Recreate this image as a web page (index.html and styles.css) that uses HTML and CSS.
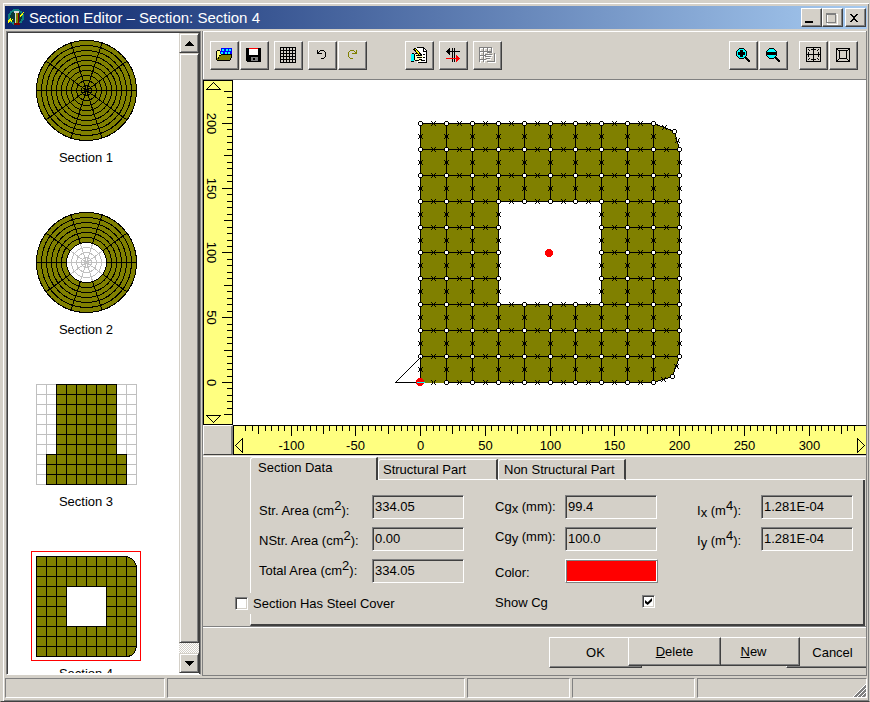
FILE: index.html
```html
<!DOCTYPE html>
<html lang="en">
<head>
<meta charset="utf-8">
<title>Section Editor</title>
<link rel="stylesheet" href="styles.css">
</head>
<body>
<div class="window">
  <header class="titlebar">
    <svg class="app-icon" width="19" height="19" viewBox="0 0 19 19" shape-rendering="crispEdges">
      <circle cx="9" cy="9" r="7" fill="#083838" stroke="#108080" stroke-width="2"/>
      <path d="M9 5h2v10H9z" fill="#808000"/>
      <path d="M7 3h5v2H7zM8 5h1v10H8z" fill="#d8d8d8"/>
      <path d="M11 5h1v10h-1z" fill="#800000"/>
      <path d="M1 13l3-4v3l2-1-2 4v-2l-3 2zM13 7l5-5-2 4-3 3z" fill="#ffff00"/>
      <path d="M7 15h6v2H7z" fill="#800000"/>
    </svg>
    <h1 class="title">Section Editor – Section: Section 4</h1>
    <div class="caption-buttons">
      <button class="cap" type="button" aria-label="Minimize"><svg width="16" height="14" shape-rendering="crispEdges"><path d="M3 10h8v2H3z"/></svg></button>
      <button class="cap" type="button" aria-label="Maximize" disabled><svg width="16" height="14" shape-rendering="crispEdges"><path d="M4 3.500h10v10H4z" fill="none" stroke="#fff"/><path d="M3.500 2.500h9v9h-9zM3 3.500h10" fill="none" stroke="#808080"/></svg></button>
      <button class="cap cap-close" type="button" aria-label="Close"><svg width="16" height="14" shape-rendering="crispEdges"><path d="M4 3h2v1h1v1h2V4h1V3h2v1h-1v1h-1v1H9v2h1v1h1v1h1v1h-2v-1H9V9H7v1H6v1H4v-1h1V9h1V8h1V6H6V5H5V4H4z"/></svg></button>
    </div>
  </header>

  <div class="workspace">
    <aside class="browser">
      <ul class="sections">
        <li class="section"><div class="thumb"><svg id="thumb1" width="101" height="101"></svg></div><span>Section 1</span></li>
        <li class="section"><div class="thumb"><svg id="thumb2" width="101" height="101"></svg></div><span>Section 2</span></li>
        <li class="section"><div class="thumb"><svg id="thumb3" width="101" height="101"></svg></div><span>Section 3</span></li>
        <li class="section"><div class="thumb selected"><svg id="thumb4" width="101" height="101"></svg></div><span>Section 4</span></li>
      </ul>
      <div class="scrollbar">
        <button class="scroll-btn" type="button" aria-label="Scroll up"><svg width="9" height="5" shape-rendering="crispEdges"><path d="M4 0h1v1h1v1h1v1h1v1h1v1H0V4h1V3h1V2h1V1h1z"/></svg></button>
        <div class="scroll-thumb"></div>
        <button class="scroll-btn scroll-down" type="button" aria-label="Scroll down"><svg width="9" height="5" shape-rendering="crispEdges"><path d="M0 0h9v1H8v1H7v1H6v1H5v1H4V4H3V3H2V2H1V1H0z"/></svg></button>
      </div>
    </aside>

    <main class="editor">
      <div class="toolbar">
        <div class="tools">
          <button class="tool" type="button" aria-label="Open"><svg width="17" height="16" shape-rendering="crispEdges"><path d="M5 1h11v6H4V4h1z" fill="#0000ff"/><path d="M6 2h2v2H6zM10 2h2v2h-2zM13 2h2v2h-2zM5 5h2v2H5zM9 5h2v2H9zM12 5h2v2h-2z" fill="#00ffff"/><path d="M1 4h3v3h1v2H3v2H1z" fill="#ffff80"/><path d="M5 8h11v2h-1v2h-1v1H1v-2h2V9h2z" fill="#808000"/><path d="M1 3h3v1H1zM0 4h1v9H0zM1 13h13v1H1zM5 7h11v1H5zM3 8h2v1H3zM2 10h1v2H2zM15 8h1v3h-1zM14 11h1v2h-1z"/></svg></button>
          <button class="tool" type="button" aria-label="Save"><svg width="17" height="16" shape-rendering="crispEdges"><path d="M0 1h15v14H1v-1H0z"/><path d="M3 2h9v6H3z" fill="#fff"/><path d="M3 1h9v1H3z" fill="#f00"/><path d="M5 10h7v4H5z" fill="#808080"/><path d="M7 11h2v2H7z" fill="#000"/></svg></button>
        </div>
        <button class="tool gap-s" type="button" aria-label="Grid"><svg width="17" height="17" shape-rendering="crispEdges"><path d="M.5 0v16M3.500 0v16M6.500 0v16M9.500 0v16M12.500 0v16M15.500 0v16M0 .5h16M0 3.500h16M0 6.500h16M0 9.500h16M0 12.500h16M0 15.500h16" stroke="#000"/></svg></button>
        <div class="tools gap-s">
          <button class="tool" type="button" aria-label="Undo"><svg width="17" height="16" shape-rendering="crispEdges"><path d="M3 3h1v4H3zM4 6h4v1H4zM4 5h1v1H4zM5 4h1v1H5zM6 3h4v1H6zM10 4h1v1h-1zM11 5h1v5h-1zM10 10h1v1h-1zM7 11h3v1H7z"/></svg></button>
          <button class="tool" type="button" aria-label="Redo"><svg width="17" height="16" shape-rendering="crispEdges"><path d="M12 3h1v4h-1zM8 6h4v1H8zM11 5h1v1h-1zM10 4h1v1h-1zM6 3h4v1H6zM5 4h1v1H5zM4 5h1v5H4zM5 10h1v1H5zM6 11h3v1H6z" fill="#808000"/></svg></button>
        </div>
        <div class="tools tools-mid">
          <button class="tool" type="button" aria-label="Edit"><svg width="17" height="17" shape-rendering="crispEdges"><path d="M5 1h8l3 3v12H6z" fill="#fff"/><path d="M5.500 .5h7l3 3v12h-9M12.500 1v3h3M8 13.500h6M12 7.500h2M12 10.500h2" fill="none" stroke="#000"/><path d="M0 7h3v7H0z" fill="#00ffff"/><path d="M3 7h7v2h2v2h-2v3H4l-1-1z" fill="#ffffc0"/><path d="M3.500 7v6M4 6.500h5M5 8.500h6M6 10.500h5M4 13.500h4M8 12.500h3M1 6.500h2M0 14.500h3" stroke="#000"/><path d="M3.500 1.500l6 7" stroke="#000" stroke-width="3"/><path d="M4 2l5 6" stroke="#ffff00" stroke-width="1"/></svg></button>
          <button class="tool" type="button" aria-label="Move axes"><svg width="17" height="17" shape-rendering="crispEdges"><path d="M7 1h1v14H7zM9 1h1v14H9zM2 4h13v1H2zM1 4h1V3h1V2h1V1h1v7H4V7H3V6H2V5H1z"/><path d="M1 11h13v1H1zM11 8h1v1h1v1h1v1h1v1h-1v1h-1v1h-1v1h-1z" fill="#f00"/></svg></button>
          <button class="tool" type="button" aria-label="Edit mesh" disabled><svg width="18" height="17" shape-rendering="crispEdges"><g fill="none" stroke="#fff" transform="translate(1 1)"><path d="M.5 0v15M4.500 0v15M8.500 0v6M12.500 0v5M0 .5h13M0 4.500h13M0 8.500h7M0 12.500h7M6 7.500h7M6 9.500h6M7 11.500h4M8 14.500h8M15.500 6v9"/></g><path d="M.5 0v15M4.500 0v15M8.500 0v6M12.500 0v5M0 .5h13M0 4.500h13M0 8.500h7M0 12.500h7M6 7.500h7M6 9.500h6M7 11.500h4M8 14.500h8M15.500 6v9M9 5.500h4" fill="none" stroke="#808080"/></svg></button>
        </div>
        <div class="tools tools-end">
          <button class="tool" type="button" aria-label="Zoom in"><svg width="17" height="16" shape-rendering="crispEdges"><path d="M4 1h5v1h1v1h1v1h1v5h-1v1h-1v1H9v1H4v-1H3v-1H2V9H1V4h1V3h1V2h1z"/><path d="M4 2h5v1h1v1h1v5h-1v1H9v1H4v-1H3V9H2V4h1V3h1z" fill="#00ffff"/><path d="M5 3h3v2h2v3H8v2H5V8H3V5h2zM10 10h2v1h1v1h1v1h1v2h-2v-1h-1v-1h-1v-1h-1z"/></svg></button>
          <button class="tool" type="button" aria-label="Zoom out"><svg width="17" height="16" shape-rendering="crispEdges"><path d="M4 1h5v1h1v1h1v1h1v5h-1v1h-1v1H9v1H4v-1H3v-1H2V9H1V4h1V3h1V2h1z"/><path d="M4 2h5v1h1v1h1v5h-1v1H9v1H4v-1H3V9H2V4h1V3h1z" fill="#00ffff"/><path d="M2 5h9v3H2zM10 10h2v1h1v1h1v1h1v2h-2v-1h-1v-1h-1v-1h-1z"/></svg></button>
        </div>
        <div class="tools gap-l">
          <button class="tool" type="button" aria-label="Fit all"><svg width="17" height="16" shape-rendering="crispEdges"><path d="M1.500 .5h14v14h-14zM8.500 0v15M1 7.500h15M6 2.500h5M6 12.500h5M3.500 5v5M13.500 5v5M3 2.500h1M4 3.500h1M13 2.500h1M12 3.500h1M3 12.500h1M4 11.500h1M13 12.500h1M12 11.500h1" fill="none" stroke="#000"/></svg></button>
          <button class="tool" type="button" aria-label="Fit section"><svg width="17" height="16" shape-rendering="crispEdges"><path d="M1.500 1.500h13v13h-13zM4.500 3.500h7v8h-7zM2 2.500h1M3 3.500h1M12 3.500h1M13 2.500h1M3 12.500h1M2 13.500h1M12 12.500h1M13 13.500h1" fill="none" stroke="#000"/></svg></button>
        </div>
      </div>

      <div class="plot">
        <svg class="ruler ruler-v" id="rulerV"></svg>
        <svg class="canvas" id="canvas"></svg>
        <div class="corner"></div>
        <svg class="ruler ruler-h" id="rulerH"></svg>
      </div>

      <section class="data">
        <div class="tabs" role="tablist">
          <button class="tab active" type="button" role="tab" aria-selected="true">Section Data</button>
          <button class="tab tab-part" type="button" role="tab" aria-selected="false">Structural Part</button>
          <button class="tab" type="button" role="tab" aria-selected="false">Non Structural Part</button>
          <div class="tab-rest"></div>
        </div>
        <div class="page">
          <div class="fields">
            <div class="labels labels-area">
              <label for="str">Str. Area (cm<sup>2</sup>):</label>
              <label for="nstr">NStr. Area (cm<sup>2</sup>):</label>
              <label for="total">Total Area (cm<sup>2</sup>):</label>
            </div>
            <div class="inputs">
              <input id="str" type="text" value="334.05" readonly>
              <input id="nstr" type="text" value="0.00" readonly>
              <input id="total" type="text" value="334.05" readonly>
            </div>
            <div class="labels labels-cg">
              <label for="cgx">Cg<sub>x</sub> (mm):</label>
              <label for="cgy">Cg<sub>y</sub> (mm):</label>
              <label class="color-label" for="color">Color:</label>
              <label for="showcg">Show Cg</label>
            </div>
            <div class="inputs">
              <input id="cgx" type="text" value="99.4" readonly>
              <input id="cgy" type="text" value="100.0" readonly>
              <button id="color" class="swatch" type="button"></button>
              <input id="showcg" class="check check-cg" type="checkbox" checked>
            </div>
            <div class="labels labels-inertia">
              <label for="ix">I<sub>x</sub> (m<sup>4</sup>):</label>
              <label for="iy">I<sub>y</sub> (m<sup>4</sup>):</label>
            </div>
            <div class="inputs">
              <input id="ix" type="text" value="1.281E-04" readonly>
              <input id="iy" type="text" value="1.281E-04" readonly>
            </div>
          </div>
          <div class="cover">
            <input id="cover" class="check" type="checkbox">
            <label for="cover">Section Has Steel Cover</label>
          </div>
        </div>
      </section>

      <footer class="actions">
        <button class="action" type="button">OK</button>
        <button class="action short top" type="button"><u>D</u>elete</button>
        <button class="action short" type="button"><u>N</u>ew</button>
        <button class="action under" type="button">Cancel</button>
      </footer>
    </main>
  </div>

  <div class="statusbar">
    <div class="cell cell-a"></div>
    <div class="cell cell-b"></div>
    <div class="cell cell-c"></div>
    <div class="cell cell-d"></div>
    <div class="cell cell-e"><svg width="13" height="13"><path d="M0 13L13 0M4 13L13 4M8 13L13 8" stroke="#fff"/><path d="M1.500 13L13 1.500M2.500 13L13 2.500M5.500 13L13 5.500M6.500 13L13 6.500M9.500 13L13 9.500M10.500 13L13 10.500" stroke="#808080"/></svg></div>
  </div>
</div>
<script src="app.js"></script>
</body>
</html>
```
FILE: styles.css
```css
* { box-sizing: border-box; }
body {
  margin: 0;
  background: #d4d0c8;
  color: #000;
  font: 13px/16px "Liberation Sans", Arial, sans-serif;
}
button, input { font: inherit; color: inherit; margin: 0; padding: 0; border-radius: 0; }
svg { display: block; shape-rendering: crispEdges; }

.window {
  display: flex;
  flex-direction: column;
  height: 100vh;
  border: 1px solid #d4d0c8;
  border-bottom-color: #404040;
  box-shadow: inset 2px 2px #d4d0c8, inset 3px 3px #fff, inset -1px -1px #808080;
  padding: 5px 2px 3px 4px;
}

.titlebar {
  display: flex;
  align-items: center;
  height: 23px;
  flex: none;
  padding: 0 1px 0 2px;
  background: linear-gradient(to right, #0a246a, #a6caf0);
}
.title { margin: 0 0 0 3px; font-size: 15px; font-weight: normal; color: #fff; flex: 1; }
.caption-buttons { display: flex; }
.cap {
  width: 21px;
  height: 19px;
  background: #d4d0c8;
  border: 1px solid;
  border-color: #fff #404040 #404040 #fff;
  box-shadow: inset -1px -1px #808080;
  overflow: hidden;
}
.cap-close { margin-left: 2px; }

.workspace { display: flex; flex: 1; min-height: 0; padding-top: 2px; }

.browser {
  display: flex;
  flex: none;
  width: 195px;
  margin: 0 1px 1px;
  border: 1px solid;
  border-color: #808080 #808080 #fff #808080;
  box-shadow: inset 1px 1px #404040, inset -1px 0 #404040;
  padding: 1px 1px 1px 1px;
  background: #fff;
  min-height: 0;
}
.sections { list-style: none; margin: 0; padding: 2px 0 0 23px; flex: 1; overflow: hidden; }
.section { width: 110px; height: 172px; text-align: center; }
.thumb { width: 110px; height: 110px; border: 1px solid transparent; padding: 4px 3px 3px 4px; margin-bottom: 5px; }
.selected { border-color: #f00; }
.scrollbar {
  display: flex;
  flex-direction: column;
  width: 20px;
  flex: none;
  background: repeating-conic-gradient(#fff 0 25%, #d4d0c8 0 50%) 0 0 / 2px 2px;
}
.scroll-btn, .scroll-thumb {
  background: #d4d0c8;
  border: 1px solid;
  border-color: #d4d0c8 #404040 #404040 #d4d0c8;
  box-shadow: inset 1px 1px #fff, inset -1px -1px #808080;
}
.scroll-btn { height: 20px; display: grid; place-items: center; flex: none; }
.scroll-thumb { flex: 1; margin-bottom: 10px; }

.editor {
  display: flex;
  flex-direction: column;
  flex: 1;
  min-width: 0;
  border: 0 solid #808080;
  border-width: 0 1px 1px;
}
.toolbar {
  display: flex;
  align-items: center;
  flex: none;
  height: 49px;
  padding: 0 8px 0 7px;
  border-bottom: 1px solid #808080;
  box-shadow: inset 1px 1px #fff;
}
.tools { display: flex; gap: 1px; }
.gap-s { margin-left: 5px; }
.gap-l { margin-left: 11px; }
.tools-mid { gap: 5px; margin-left: 38px; }
.tools-end { margin-left: auto; }
.tool {
  width: 29px;
  height: 29px;
  display: grid;
  place-items: center;
  background: #d4d0c8;
  border: 1px solid;
  border-color: #fff #404040 #404040 #fff;
  box-shadow: inset -1px -1px #808080;
}

.plot { display: grid; grid-template: minmax(0, 1fr) 30px / 30px minmax(0, 1fr); flex: 1; min-height: 0; }
.plot svg { width: 100%; height: 100%; min-height: 0; }
.canvas { background: #fff; }
.ruler { background: #ffff80; border: 1px solid #000; }
.ruler-h { border-right: 0; }
.ruler text { font-size: 13px; text-anchor: middle; }
.corner { border: 1px solid; border-color: #fff #808080 #404040 #fff; box-shadow: inset -1px 0 #808080; }

.data { flex: none; border-top: 1px solid #d4d0c8; border-bottom: 1px solid #808080; padding: 1px 1px 0 47px; box-shadow: inset 0 1px #fff; }
.tabs { display: flex; align-items: flex-end; height: 23px; }
.tab {
  height: 21px;
  width: 128px;
  padding: 0 0 0 5px;
  text-align: left;
  background: #d4d0c8;
  border: 1px solid #fff;
  border-right: 2px solid #404040;
  border-radius: 3px 0 0 0;
}
.tab-part { width: 120px; padding-left: 4px; }
.active { height: 23px; width: 128px; padding: 0 0 2px 7px; border-bottom: 0; }
.tab-rest { flex: 1; border-bottom: 1px solid #fff; }
.page {
  height: 146px;
  border-left: 1px solid #fff;
  border-right: 2px solid #404040;
  border-bottom: 2px solid #404040;
  padding: 12px 8px 0;
}
.fields { display: flex; height: 101px; }
.labels { display: flex; flex-direction: column; white-space: nowrap; }
.labels label { flex: none; height: 30px; line-height: 30px; }
.labels-area { width: 113px; padding-top: 4px; }
.labels-cg { width: 101px; padding-left: 31px; }
.labels-inertia { width: 104px; padding-left: 40px; padding-top: 4px; }
.labels .color-label { margin-top: 6px; }
sup, sub { font-size: 13px; line-height: 0; }
sup { vertical-align: 5px; }
sub { vertical-align: -2px; }
.inputs { display: flex; flex-direction: column; gap: 8px; width: 92px; padding-top: 3px; }
.inputs > * { flex: none; }
.inputs input[type="text"] {
  width: 92px;
  height: 24px;
  padding: 0 2px 2px;
  background: #d4d0c8;
  border: 1px solid;
  border-color: #808080 #fff #fff #808080;
  box-shadow: inset 1px 1px #404040;
}
.swatch {
  width: 93px;
  height: 24px;
  background: #f00;
  border: 1px solid;
  border-color: #fff #808080 #808080 #fff;
  box-shadow: inset 1px 1px #808080, inset -1px -1px #fff;
}
.check {
  appearance: none;
  width: 13px;
  height: 13px;
  background: #fff;
  border: 1px solid;
  border-color: #808080 #fff #fff #808080;
  box-shadow: inset 1px 1px #404040, inset -1px -1px #d4d0c8;
  display: grid;
  place-items: center;
  flex: none;
}
.check:checked::before {
  content: "";
  width: 7px;
  height: 7px;
  background: #000;
  clip-path: polygon(0 28%, 38% 62%, 100% 0, 100% 42%, 38% 100%, 0 70%);
}
.inputs .check-cg { margin: 4px 0 0 77px; }
.cover {
  display: flex;
  align-items: center;
  gap: 5px;
  width: 180px;
  height: 21px;
  margin: 0 0 0 -24px;
  background: #d4d0c8;
}

.actions {
  display: flex;
  justify-content: flex-end;
  align-items: flex-start;
  flex: none;
  height: 48px;
  padding-top: 10px;
  overflow: hidden;
  box-shadow: inset 0 1px #fff;
}
.action {
  position: relative;
  width: 93px;
  height: 31px;
  margin-left: -14px;
  background: #d4d0c8;
  border: 1px solid;
  border-color: #fff #404040 #404040 #fff;
  box-shadow: inset -1px -1px #808080;
  flex: none;
}
.short { height: 29px; z-index: 1; }
.top { z-index: 2; }
.under { margin-right: -13px; }

.statusbar { display: flex; flex: none; gap: 2px; height: 20px; margin-top: 2px; }
.cell { border: 1px solid; border-color: #808080 #fff #fff #808080; }
.cell-a { width: 160px; }
.cell-b { width: 298px; }
.cell-c { width: 103px; }
.cell-d { width: 123px; }
.cell-e { flex: 1; display: flex; justify-content: flex-end; align-items: flex-end; }
```
FILE: app.js
```js
const NS = 'http://www.w3.org/2000/svg';
const OLIVE = '#808000';

function add(parent, tag, attrs, text) {
  const el = document.createElementNS(NS, tag);
  for (const key in attrs) el.setAttribute(key, attrs[key]);
  if (text !== undefined) el.textContent = text;
  parent.appendChild(el);
  return el;
}

// Circular sections: concentric rings cut by ten spokes.
function drawRound(svg, holeRadius) {
  const c = 50.5;
  add(svg, 'circle', { cx: c, cy: c, r: 50, fill: OLIVE });
  if (holeRadius) add(svg, 'circle', { cx: c, cy: c, r: holeRadius, fill: '#fff' });
  const spokes = (from, to, color) => {
    for (let i = 0; i < 10; i++) {
      const a = i * Math.PI / 5;
      add(svg, 'line', {
        x1: c + from * Math.cos(a), y1: c + from * Math.sin(a),
        x2: c + to * Math.cos(a), y2: c + to * Math.sin(a), stroke: color
      });
    }
  };
  if (holeRadius) spokes(0, holeRadius, '#c0c0c0');
  spokes(holeRadius, 50, '#000');
  for (let r = 5; r <= 50; r += 5) {
    add(svg, 'circle', { cx: c, cy: c, r: r, fill: 'none', stroke: r < holeRadius ? '#c0c0c0' : '#000' });
  }
}

// Square-celled sections: a cell is solid when the test says so.
function drawCells(svg, solid, showEmpty) {
  const pass = (wanted, fill, stroke) => {
    for (let r = 0; r < 10; r++) for (let c = 0; c < 10; c++) {
      if (solid(c, r) !== wanted) continue;
      add(svg, 'rect', { x: c * 10 + 0.5, y: r * 10 + 0.5, width: 10, height: 10, fill, stroke });
    }
  };
  if (showEmpty) pass(false, '#fff', '#c0c0c0');
  pass(true, OLIVE, '#000');
}

drawRound(document.getElementById('thumb1'), 0);
drawRound(document.getElementById('thumb2'), 20);
drawCells(document.getElementById('thumb3'), (c, r) => r < 7 ? c >= 2 && c < 8 : c >= 1 && c < 9, true);

const inRing = (c, r) => c < 3 || c > 6 || r < 3 || r > 6;
const thumb4 = document.getElementById('thumb4');
const corner = (c, r) => c === 9 && (r === 0 || r === 9);
drawCells(thumb4, (c, r) => inRing(c, r) && !corner(c, r), false);
add(thumb4, 'path', { d: 'M90.5 .5L95.500 2.500L98.500 5.500L100.500 10.500H90.500zM90.500 90.500H100.500L98.500 96.500L95.500 99.500L91.500 100.500H90.500z', fill: OLIVE, stroke: '#000' });

// Model space to canvas pixels.
const SCALE = 1.295, ORIGIN_X = 187, ORIGIN_Y = 302;
const px = x => ORIGIN_X + Math.round(x * SCALE) + 0.5;
const py = y => ORIGIN_Y - Math.round(y * SCALE) + 0.5;

function drawSection() {
  const svg = document.getElementById('canvas');
  const nodes = new Map(), edges = new Map();
  const node = (i, j) => {
    if (i === 10 && j === 10) return [px(196), py(194)];
    if (i === 10 && j === 0) return [px(194.5), py(5)];
    return [px(i * 20), py(j * 20)];
  };
  for (let i = 0; i < 10; i++) for (let j = 0; j < 10; j++) {
    if (!inRing(i, j)) continue;
    const ring = [[i, j], [i + 1, j], [i + 1, j + 1], [i, j + 1]];
    add(svg, 'polygon', { points: ring.map(p => node(...p).join()).join(' '), fill: OLIVE });
    ring.forEach((p, k) => {
      const q = ring[(k + 1) % 4];
      nodes.set(p.join(), node(...p));
      edges.set([p.join(), q.join()].sort().join('|'), [node(...p), node(...q)]);
    });
  }
  const lines = add(svg, 'g', { stroke: '#000' });
  const marks = add(svg, 'g', {});
  const arms = [[-2, -2], [-1, -1], [1, -1], [2, -2], [-2, 2], [-1, 1], [1, 1], [2, 2], [-1, 0], [1, 0]];
  for (const [key, [a, b]] of edges) {
    if (key !== '0,0|1,0') add(lines, 'line', { x1: a[0], y1: a[1], x2: b[0], y2: b[1] });
    const mx = Math.floor((a[0] + b[0]) / 2), my = Math.floor((a[1] + b[1]) / 2);
    add(marks, 'path', { d: arms.map(([dx, dy]) => `M${mx + dx} ${my + dy}h1v1h-1z`).join('') });
  }
  for (const [x, y] of nodes.values()) {
    const l = x - 2.5, t = y - 2.5;
    add(svg, 'path', { d: `M${l + 1} ${t}h3v1h1v3h-1v1h-3v-1h-1v-3h1z` });
    add(svg, 'rect', { x: l + 1, y: t + 1, width: 3, height: 3, fill: '#fff' });
  }
  const ox = px(0), oy = py(0);
  add(svg, 'path', { d: `M${ox} ${oy - 25}L${ox - 25} ${oy}H${ox}`, fill: 'none', stroke: '#000' });
  add(svg, 'circle', { cx: ox - 0.5, cy: oy - 0.5, r: 4, fill: '#f00' });
  add(svg, 'line', { x1: ox - 4, y1: oy, x2: ox + 4, y2: oy, stroke: '#00ffff' });
  add(svg, 'circle', { cx: px(99.4) - 0.5, cy: py(100) + 0.5, r: 4, fill: '#f00' });
}

function drawRulers() {
  const h = document.getElementById('rulerH'), v = document.getElementById('rulerV');
  h.replaceChildren();
  v.replaceChildren();
  const width = h.clientWidth, height = v.clientHeight;
  const size = u => u % 50 === 0 ? 10 : u % 25 === 0 ? 8 : 5;
  for (let u = -1000; u <= 3000; u += 5) {
    const x = px(u) - 1, y = py(u) - 1;
    if (x > 10 && x < width - 9) {
      add(h, 'line', { x1: x, x2: x, y1: 0, y2: size(u), stroke: '#000' });
      if (u % 50 === 0) add(h, 'text', { x: x, y: 24 }, u);
    }
    if (y > 9 && y < height - 9) {
      add(v, 'line', { x1: 28 - size(u), x2: 28, y1: y, y2: y, stroke: '#000' });
      if (u % 50 === 0) add(v, 'text', { transform: `translate(3 ${y}) rotate(90)` }, u);
    }
  }
  const outline = { fill: 'none', stroke: '#000' };
  add(h, 'path', { d: 'M1.500 19.500L8.500 12.500V26.500z', ...outline });
  add(h, 'path', { d: `M${width - 1.5} 19.500l-7 -7v14z`, ...outline });
  add(v, 'path', { d: 'M9.500 1.500L2.500 8.500H16.500z', ...outline });
  add(v, 'path', { d: `M9.500 ${height - 1.5}l-7 -7h14z`, ...outline });
}

drawSection();
drawRulers();
window.addEventListener('resize', drawRulers);
```
